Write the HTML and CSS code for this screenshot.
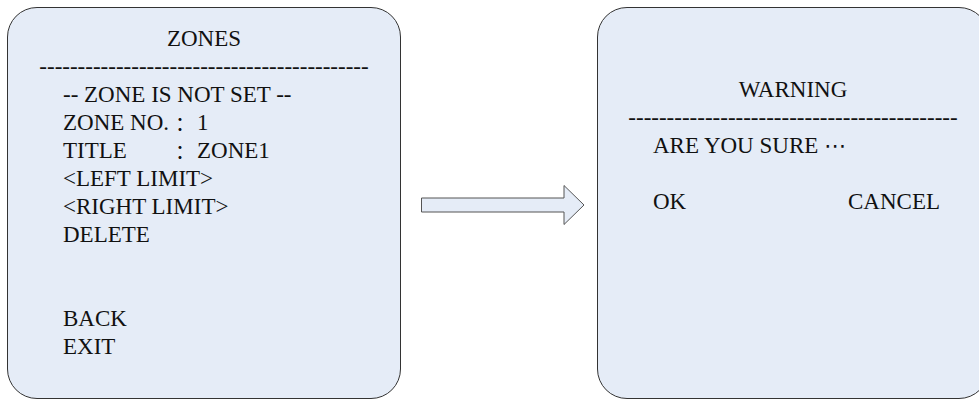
FILE: index.html
```html
<!DOCTYPE html>
<html lang="en">
<head>
  <meta charset="UTF-8">
  <title>Zones Menu</title>
  <link rel="stylesheet" href="styles.css">
</head>
<body>
  <div class="screens">
    <div class="osd osd-zones">
      <div class="osd-title">ZONES</div>
      <div class="osd-rule">-------------------------------------------</div>
      <div class="osd-line">-- ZONE IS NOT SET --</div>
      <div class="osd-line field">
        <span class="field-label">ZONE NO.</span><span class="colon">：</span><span>1</span>
      </div>
      <div class="osd-line field">
        <span class="field-label">TITLE</span><span class="colon">：</span><span>ZONE1</span>
      </div>
      <div class="osd-line">&lt;LEFT LIMIT&gt;</div>
      <div class="osd-line">&lt;RIGHT LIMIT&gt;</div>
      <div class="osd-line">DELETE</div>
      <div class="osd-gap"></div>
      <div class="osd-line">BACK</div>
      <div class="osd-line">EXIT</div>
    </div>

    <div class="arrow">
      <svg width="164" height="40" viewBox="0 0 164 40">
        <polygon points="0.5,13 143,13 143,0.5 163,20 143,39.5 143,27 0.5,27" fill="#e5ecf7" stroke="#555" stroke-width="1"/>
      </svg>
    </div>

    <div class="osd osd-warning">
      <div class="osd-title">WARNING</div>
      <div class="osd-rule">-------------------------------------------</div>
      <div class="osd-line">ARE YOU SURE <span class="dots">⋯</span></div>
      <div class="osd-line"></div>
      <div class="osd-line buttons">
        <span>OK</span>
        <span>CANCEL</span>
      </div>
    </div>
  </div>
</body>
</html>
```

FILE: styles.css
```css
body {
  margin: 0;
  background-color: white;
  overflow: hidden;
  font-family: "Liberation Serif", "Noto Sans CJK SC", serif;
  font-size: 23px;
  color: #111;
}
.screens {
  display: flex;
  padding: 7px 0 0 7px;
  width: 1100px;
}
.osd {
  flex-shrink: 0;
  box-sizing: border-box;
  height: 392px;
  background-color: #e5ecf7;
  border: 1.5px solid #333;
  border-radius: 30px;
  line-height: 28px;
}
.osd-zones {
  width: 394px;
  padding: 17px 20px 0 55px;
}
.osd-warning {
  width: 392px;
  padding: 68px 48px 0 55px;
}
.osd-title,
.osd-rule {
  margin-left: -55px;
  margin-right: -20px;
  text-align: center;
  white-space: nowrap;
}
.osd-warning .osd-title,
.osd-warning .osd-rule {
  margin-right: -48px;
}
.osd-line {
  height: 28px;
  white-space: nowrap;
}
.osd-gap {
  height: 56px;
}
.field {
  display: flex;
}
.field-label {
  width: 112px;
}
.colon {
  width: 22px;
  font-family: "Noto Sans CJK SC", serif;
  font-size: 20px;
}
.dots {
  font-family: "DejaVu Sans", sans-serif;
  font-size: 22px;
}
.buttons {
  display: flex;
  justify-content: space-between;
}
.arrow {
  align-self: center;
  margin: 3px 12px 0 20px;
  display: flex;
}
```
